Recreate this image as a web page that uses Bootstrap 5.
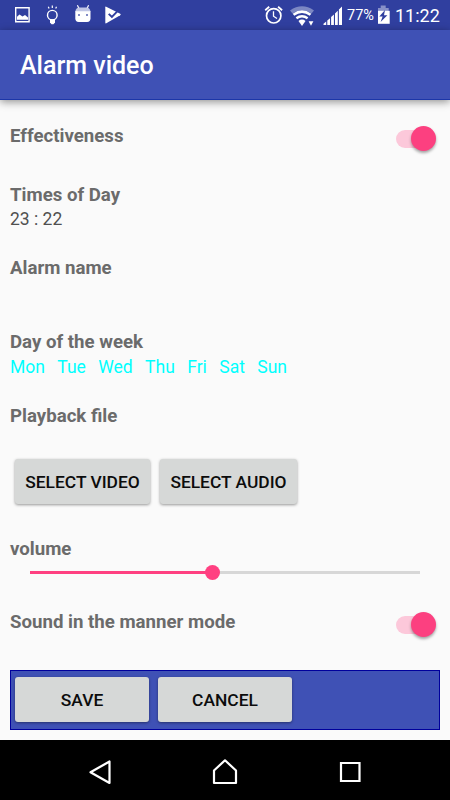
<!DOCTYPE html>
<html lang="en">
<head>
<meta charset="utf-8">
<meta name="viewport" content="width=device-width, initial-scale=1">
<title>Alarm video</title>
<link href="https://cdn.jsdelivr.net/npm/bootstrap@5.3.0/dist/css/bootstrap.min.css" rel="stylesheet">
<style>
body{font-family:Roboto,"Liberation Sans",sans-serif;background:#fafafa;color:#6b6b6b;width:450px;height:800px;overflow:hidden}
.status-bar{height:30px;background:#303f9f;color:#fff}
.status-bar svg,.nav-keys svg{display:block}
.status-pct{font-size:14.5px;line-height:32px;width:29px;margin-left:2px;white-space:nowrap}
.status-clock{font-size:18px;line-height:31px;margin-left:5px;width:46px;white-space:nowrap}
.app-bar{height:70px;background:#3f51b5;color:#fff;border-bottom:1px solid #1c36a8;box-shadow:0 2px 8px rgba(0,0,0,.42);padding:3px 20px 0}
.app-title{font-size:25px;font-weight:500;line-height:30px;margin:0}
.content-area{height:640px;padding:0 10px}
.field-name{font-size:18.65px;font-weight:700}
.field-name,.field-value{line-height:24px;margin:0;white-space:nowrap}
.field-value{font-size:17.5px;color:#505050}
.row-first{margin-top:24px}
.group-time{margin-top:35px}
.group-name{margin-top:25px}
.group-days{margin-top:50px}
.days{color:#0ff;margin-top:1px;gap:12.4px}
.group-file{margin-top:25px}
.toggle{width:40px;height:26px;position:relative;margin:2px 4px -4px 0}
.toggle-track{width:36px;height:18px;margin-top:4px;border-radius:9px;background:#fcc8da}
.toggle-knob{position:absolute;right:0;top:0;width:25px;height:25px;border-radius:50%;background:#fc4080;box-shadow:0 2px 3px rgba(0,0,0,.35)}
.raised{height:45px;padding:1px 0 0;border:0;border-radius:3px;background:#d6d8d7;color:#0c0c0c;font-size:17.4px;font-weight:500;line-height:45px;box-shadow:0 1px 3px rgba(0,0,0,.4);white-space:nowrap}
.raised:hover{background:#ccc}
.pick-buttons{margin:31px 0 0 5px;gap:10px}
.w-video{width:135px}.w-audio{width:137px}.w-action{width:134px}
.group-volume{margin-top:33px}
.slider{position:relative;height:15px;margin:4px 20px 0}
.slider .progress{height:3px;border-radius:0;background:#d7d7d7}
.slider .progress-bar{background:#ff4081}
.slider-knob{position:absolute;left:174.5px;top:0;width:15px;height:15px;border-radius:50%;background:#ff4081}
.group-manner{margin-top:30px}
.action-bar{height:60px;margin-top:36px;background:#3f51b5;border:1px solid #00009c;padding:6px 4px;gap:9px}
.nav-keys{height:60px;background:#000}
</style>
</head>
<body>
<header>
  <div class="status-bar d-flex">
    <svg width="345" height="30" viewBox="0 0 345 30" fill="none" stroke="#fff" aria-hidden="true">
      <path d="M15.7 7.7h13.4v14H15.7z" stroke-width="1.4"/>
      <path d="M17 19.8v-3l2.5-2.2 3 2 2.5-1.5 3 2.5v2.2z" fill="#fff" stroke="none"/>
      <circle cx="52.3" cy="15.2" r="4.8" stroke-width="1.4"/>
      <path d="M50 19.2h5v3.3l-1.5 1.8h-2L50 22.5z" fill="#fff" stroke="none"/>
      <path d="M52.3 5.5v2.4M48.3 6.7l.8 1.8M56.5 6.7l-.8 1.8" stroke-width="1.2"/>
      <path d="M77.4 5.3l1.5 3M88.6 5.3l-1.5 3" stroke-width="1.2"/>
      <path d="M75.3 12q.3-4.5 4-4.5h7.2q3.7 0 4 4.5z" fill="#c0c6e5" stroke="none"/>
      <path d="M75.3 11.3h15.2v7q0 3.6-3.4 3.6h-8.4q-3.4 0-3.4-3.6z" fill="#fff" stroke="none"/>
      <path d="M78.2 14.2h1.6v1.6h-1.6zM86.2 14.2h1.6v1.6h-1.6z" fill="#303f9f" stroke="none"/>
      <path d="M105.3 7.2q0-.9.9-.5l14 7q1.2.8 0 1.5l-13.9 8.1q-1 .5-1-.6z" fill="#fff" stroke="none"/>
      <path d="M108.7 13.8l3.2 3.2 6.6-6.8" stroke="#303f9f" stroke-width="1.9"/>
      <circle cx="273.7" cy="15.8" r="7.2" stroke-width="1.7"/>
      <path d="M273.5 11.3v4.9l3.5 2.3" stroke-width="1.3"/>
      <path d="M265.2 10.2l4-3.4M282.1 10.2l-4-3.4" stroke-width="1.8"/>
      <path d="M290 10.4q12-8.4 24 0l-2.5 3.2q-9.5-6.6-19 0z" fill="#7c87c3" stroke="none"/>
      <path d="M293.5 14.7q8.5-6.2 17 0" stroke-width="2.6"/>
      <path d="M296.4 18.3q5.6-4.2 11.2 0" stroke-width="2.4"/>
      <path d="M298.5 21q3.5-2.8 7 0l-3.5 5z" fill="#fff" stroke="none"/>
      <path d="M308.6 21.3h4.8L311 25.8z" fill="#fff" stroke="none"/>
      <path d="M323.5 25v-1.2l2.7-2.3V25zM327.3 25v-4.5l2.7-2.3V25zM331.1 25v-8l2.8-2.4V25zM335 25V13.4l2.8-2.6V25zM338.9 25V9.4l3.1-3V25z" fill="#fff" stroke="none"/>
    </svg>
    <span class="status-pct">77%</span>
    <svg width="14" height="30" viewBox="0 0 14 30" aria-hidden="true"><path d="M2 8h2.7V5.5h5V8h3v4H2z" fill="#8790c8"/><path d="M2 10.8h11.7v13H2z" fill="#fff"/><path d="M9 10l-5.7 6.5h3.3l-2 5.5 6.8-6.7H8z" fill="#303f9f"/></svg>
    <span class="status-clock">11:22</span>
  </div>
  <div class="app-bar d-flex align-items-center position-relative">
    <h1 class="app-title">Alarm video</h1>
  </div>
</header>
<main class="content-area d-flex flex-column">
  <div class="d-flex justify-content-between row-first">
    <p class="field-name">Effectiveness</p>
    <div class="toggle" role="switch" aria-checked="true" aria-label="Effectiveness"><div class="toggle-track"></div><div class="toggle-knob"></div></div>
  </div>
  <div class="group-time"><p class="field-name">Times of Day</p><p class="field-value">23 : 22</p></div>
  <div class="group-name"><p class="field-name">Alarm name</p></div>
  <div class="group-days">
    <p class="field-name">Day of the week</p>
    <div class="field-value days d-flex"><span>Mon</span><span>Tue</span><span>Wed</span><span>Thu</span><span>Fri</span><span>Sat</span><span>Sun</span></div>
  </div>
  <div class="group-file"><p class="field-name">Playback file</p>
    <div class="pick-buttons d-flex">
      <button type="button" class="btn raised w-video">SELECT VIDEO</button>
      <button type="button" class="btn raised w-audio">SELECT AUDIO</button>
    </div>
  </div>
  <div class="group-volume"><p class="field-name">volume</p>
    <div class="slider d-flex align-items-center">
      <div class="progress w-100"><div class="progress-bar" style="width:46.7%"></div></div>
      <div class="slider-knob"></div>
    </div>
  </div>
  <div class="d-flex justify-content-between group-manner">
    <p class="field-name">Sound in the manner mode</p>
    <div class="toggle" role="switch" aria-checked="true" aria-label="Sound in the manner mode"><div class="toggle-track"></div><div class="toggle-knob"></div></div>
  </div>
  <div class="action-bar d-flex">
    <button type="button" class="btn raised w-action">SAVE</button>
    <button type="button" class="btn raised w-action">CANCEL</button>
  </div>
</main>
<nav class="nav-keys" aria-label="System keys">
  <svg width="450" height="60" viewBox="0 0 450 60" fill="none" stroke="#fff" stroke-width="2.2" stroke-linejoin="round" aria-hidden="true">
    <path d="M109.5 21.5v21.5L90.5 32.2z"/>
    <path d="M214 43V30.5L225 20.3l11 10.2V43z"/>
    <path d="M341 23h18.5v18H341z" stroke-linejoin="miter"/>
  </svg>
</nav>
</body>
</html>
